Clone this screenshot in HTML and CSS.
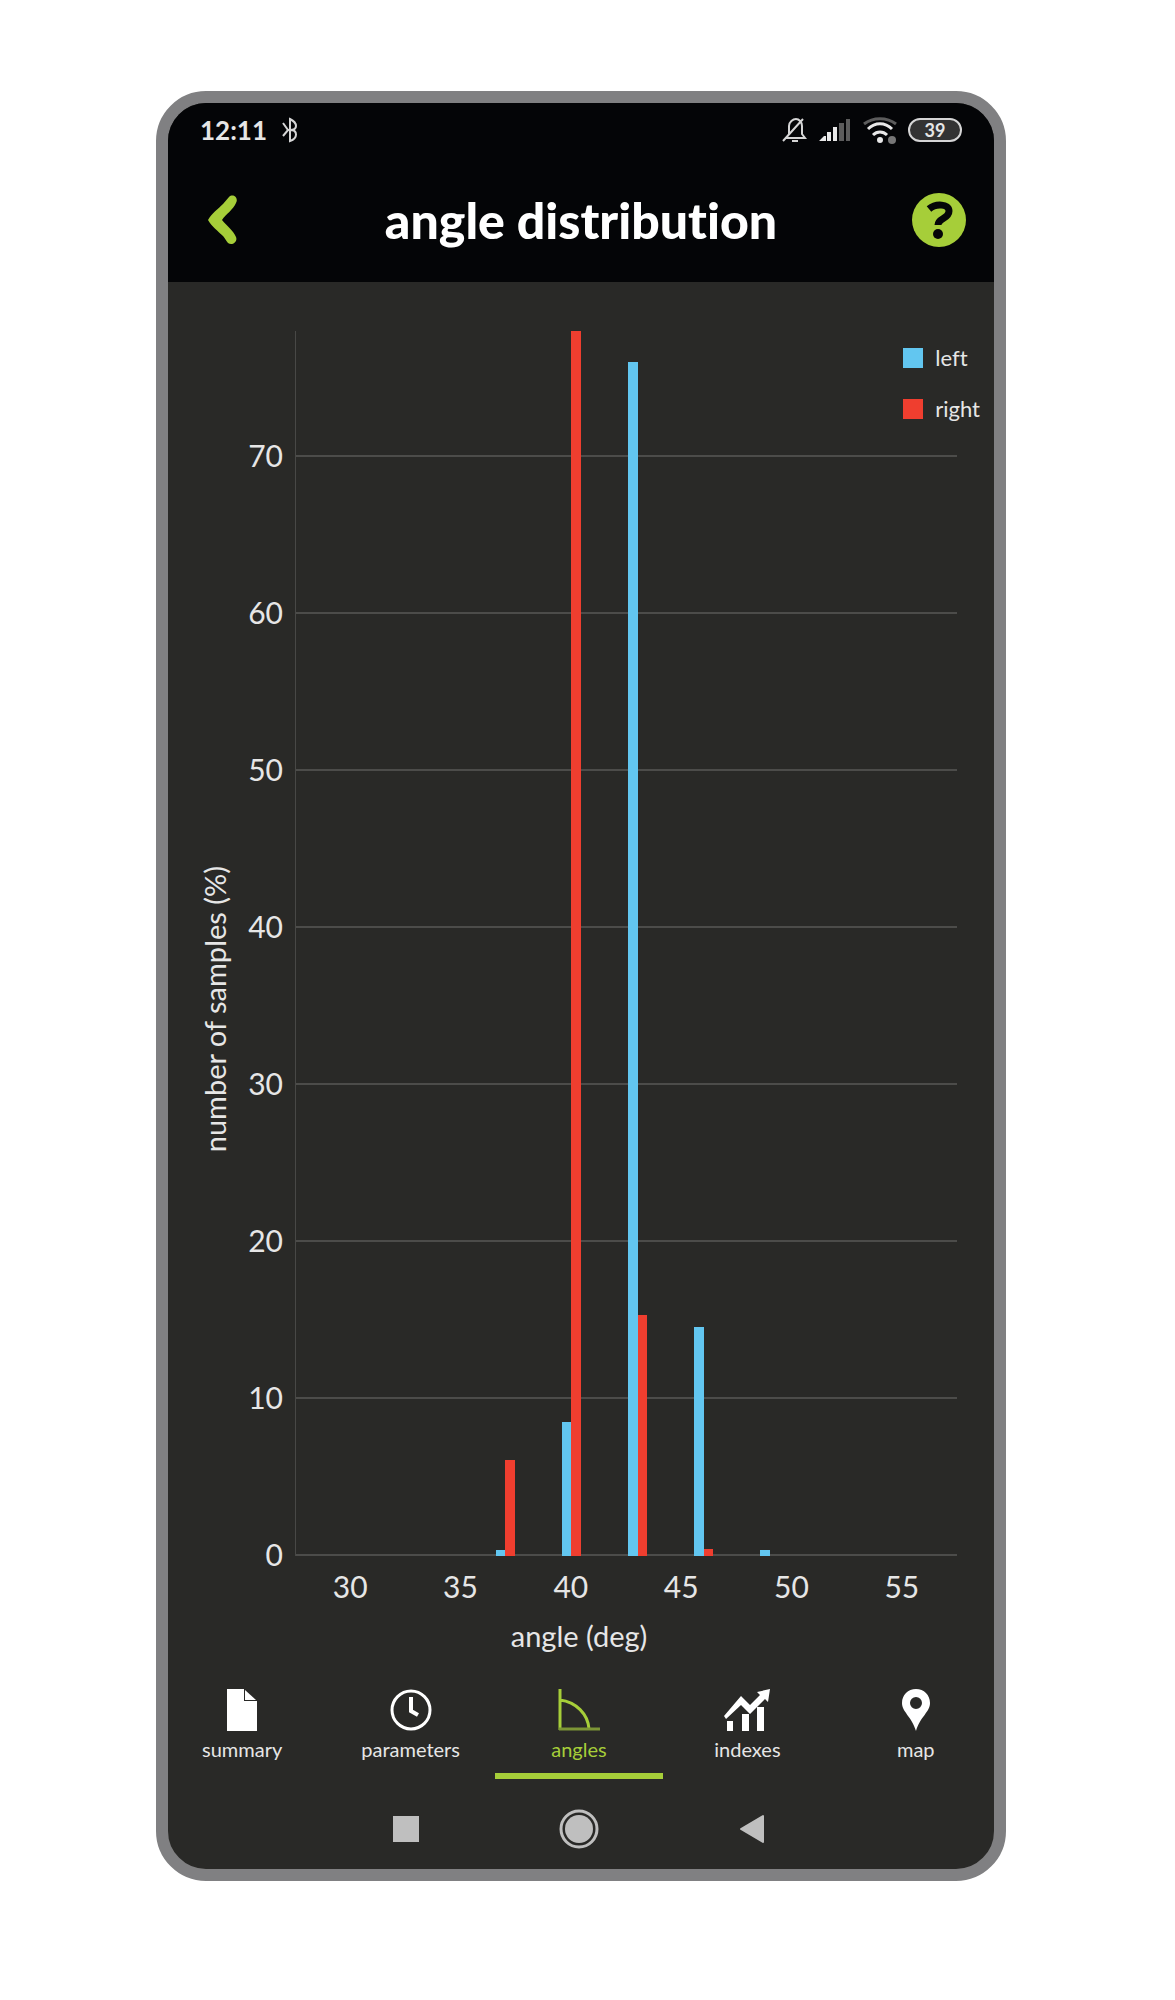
FILE: index.html
```html
<!DOCTYPE html>
<html lang="en">
<head>
<meta charset="UTF-8">
<meta name="viewport" content="width=device-width, initial-scale=1.0">
<title>angle distribution</title>
<link rel="stylesheet" href="styles.css">
</head>
<body>
<div class="phone">
    <header class="top">
        <div class="status">
            <span class="time">12:11</span>
            <svg class="bluetooth" width="18" height="28" viewBox="0 0 18 28"><path d="M2 7l5 7h2c8 0 8-7 0-11v22c8-3 8-11 0-11H7l-5 6"/></svg>
            <div class="status-right">
                <svg width="26" height="28" viewBox="0 0 26 28" fill="none" stroke="#d5d5d5" stroke-width="2"><path d="M5 22h19l-3-4v-8c0-4-3-7-6-7s-7 3-7 7v8l-3 4zM11 25h6M2 25L22 3"/></svg>
                <svg width="34" height="24" viewBox="0 0 34 24"><path fill="#e8e8e8" d="M1 23l5-5h2v5zM9 14h4v9H9zM15 9h4v14h-4z"/><path fill="#5c5c5c" d="M21 5h5v18h-5zM28 1h4v22h-4z"/></svg>
                <svg width="34" height="28" viewBox="0 0 34 28" fill="none" stroke="#e8e8e8" stroke-width="3"><path stroke="#5c5c5c" d="M1 8c9-7 23-7 32 0"/><path d="M5 13c7-7 17-7 24 0M10 19c4-4 10-4 14 0"/><circle cx="17" cy="24" r="2" fill="#e8e8e8" stroke-width="2"/><circle cx="29" cy="24" r="4" fill="#777" stroke="none"/></svg>
                <span class="battery">39</span>
            </div>
        </div>
        <div class="bar">
            <button class="icon-btn" aria-label="back"><svg width="30" height="50" viewBox="0 0 30 50"><path fill="#a6ce39" d="M21 2c4-4 10 1 7 6-3 7-10 11-14 17 5 6 11 10 14 17 2 5-4 9-8 6-2-2-3-5-5-7C10 36 4 32 0 25c4-7 10-11 15-16z"/></svg></button>
            <h1>angle distribution</h1>
            <button class="icon-btn" aria-label="help"><svg width="54" height="54" viewBox="0 0 54 54"><circle cx="27" cy="27" r="27" fill="#a6ce39"/><path d="M17 16c7-6 20-5 20 2 0 8-11 7-11 14" fill="none" stroke="#050608" stroke-width="7"/><circle cx="26" cy="41" r="5" fill="#050608"/></svg></button>
        </div>
    </header>

    <main class="chart">
        <div class="y-title"><span>number of samples (%)</span></div>
        <div class="y-axis">
            <span></span><span>70</span><span>60</span><span>50</span><span>40</span><span>30</span><span>20</span><span>10</span><span>0</span>
        </div>
        <div class="plot">
            <div class="lines"><i></i><i></i><i></i><i></i><i></i><i></i><i></i><i></i></div>
            <div class="bars">
                <div class="group deg37"><div class="left" style="height: 0.5%"></div><div class="right" style="height: 7.8%"></div></div>
                <div class="group deg40"><div class="left" style="height: 10.9%"></div><div class="right" style="height: 100%"></div></div>
                <div class="group deg43"><div class="left" style="height: 97.5%"></div><div class="right" style="height: 19.7%"></div></div>
                <div class="group deg46"><div class="left" style="height: 18.7%"></div><div class="right" style="height: 0.6%"></div></div>
                <div class="group deg49"><div class="left" style="height: 0.5%"></div><div class="right" style="height: 0%"></div></div>
            </div>
        </div>
        <div class="x-axis">
            <span class="deg30">30</span><span class="deg35">35</span><span class="deg40">40</span><span class="deg45">45</span><span class="deg50">50</span><span class="deg55">55</span>
        </div>
        <ul class="legend">
            <li><i class="left"></i>left</li>
            <li><i class="right"></i>right</li>
        </ul>
    </main>
    <div class="x-title">angle (deg)</div>

    <nav class="tabs">
        <a href="#summary"><svg width="30" height="42" viewBox="0 0 30 42"><path fill="#fff" d="M0 0h17v12h13v30H0z"/><path fill="#fff" d="M18 1l11 10H18z"/></svg>summary</a>
        <a href="#parameters"><svg width="42" height="42" viewBox="0 0 42 42" fill="none" stroke="#fff"><circle cx="21" cy="21" r="19" stroke-width="3"/><path stroke-width="4" d="M21 8v14l7 4"/></svg>parameters</a>
        <a href="#angles" class="active"><svg width="42" height="42" viewBox="0 0 42 42" fill="none" stroke="#a6ce39"><path stroke-width="3" d="M2 0v41M2 11c16 2 28 14 29 29"/><path stroke="#7d9636" stroke-width="3" d="M1 40h41"/></svg>angles</a>
        <a href="#indexes"><svg width="46" height="42" viewBox="0 0 46 42"><path fill="#fff" d="M3 32h6v10H3zM18 25h7v17h-7zM33 18h7v24h-7zM0 27L17 7l9 9 10-10-3-3L46 0l-2 13-3-3-15 15-9-9L2 30z"/></svg>indexes</a>
        <a href="#map"><svg width="28" height="42" viewBox="0 0 28 42"><path fill="#fff" fill-rule="evenodd" d="M14 0C6 0 0 6 0 14c0 9 10 14 14 28 4-14 14-19 14-28C28 6 22 0 14 0zm0 8a6 6 0 1 1 0 12 6 6 0 0 1 0-12z"/></svg>map</a>
    </nav>

    <div class="system">
        <button class="icon-btn" aria-label="recent apps"><svg width="40" height="40" viewBox="0 0 40 40"><path fill="#bfbfbf" d="M7 7h26v26H7z"/></svg></button>
        <button class="icon-btn" aria-label="home"><svg width="40" height="40" viewBox="0 0 40 40"><circle cx="20" cy="20" r="18" fill="none" stroke="#bfbfbf" stroke-width="3"/><circle cx="20" cy="20" r="14" fill="#bfbfbf"/></svg></button>
        <button class="icon-btn" aria-label="back"><svg width="40" height="40" viewBox="0 0 40 40"><path fill="#bfbfbf" stroke="#bfbfbf" stroke-width="2" stroke-linejoin="round" d="M31 7v26L9 20z"/></svg></button>
    </div>
</div>
</body>
</html>
```
FILE: styles.css
```css
* {
    box-sizing: border-box;
}
body {
    font-family: Lato, "Open Sans", sans-serif;
    font-variant-ligatures: none;
    margin: 0;
    padding: 91px 169px 119px 156px;
    background-color: #fff;
    color: #e6e6e6;
}
svg {
    display: block;
}
.phone {
    border: 12px solid #808082;
    border-radius: 50px;
    background-color: #292927;
    overflow: hidden;
}
.top {
    background-color: #040507;
    padding: 0 28px;
}
.status {
    display: flex;
    align-items: center;
    height: 54px;
    padding: 0 4px;
}
.time {
    font-size: 26px;
    font-weight: bold;
}
.bluetooth {
    margin-left: 14px;
    fill: none;
    stroke: #d5d5d5;
    stroke-width: 2;
}
.status-right {
    display: flex;
    align-items: center;
    gap: 11px;
    margin-left: auto;
}
.battery {
    width: 54px;
    height: 24px;
    border: 2px solid #d5d5d5;
    border-radius: 12px;
    background-color: #333;
    font-size: 18px;
    font-weight: bold;
    line-height: 20px;
    text-align: center;
}
.bar {
    display: grid;
    grid-template-columns: 54px 1fr 54px;
    align-items: center;
    height: 125px;
}
.icon-btn {
    display: flex;
    justify-content: center;
    padding: 0;
    border: none;
    background: none;
    cursor: pointer;
}
h1 {
    margin: 0;
    font-size: 50px;
    font-weight: 900;
    text-align: center;
    color: #fff;
}

/* chart */
.chart {
    position: relative;
    display: grid;
    grid-template-columns: 34px 40px 1fr;
    grid-template-rows: 1225px 60px;
    column-gap: 12px;
    padding: 49px 37px 0 29px;
    font-size: 30px;
}
.y-title {
    display: flex;
    align-items: center;
    justify-content: center;
    padding-top: 132px;
    font-size: 29px;
}
.y-title span {
    writing-mode: vertical-rl;
    transform: rotate(180deg);
    white-space: nowrap;
}
.y-axis, .lines {
    display: grid;
    grid-template-rows: 8fr repeat(7, 10fr);
}
.y-axis {
    grid-template-rows: 0 8fr repeat(7, 10fr);
    text-align: right;
    line-height: 32px;
}
.y-axis span {
    align-self: end;
    transform: translateY(45%);
}
.plot {
    display: grid;
    border-left: 1px solid #484846;
}
.lines, .bars {
    grid-area: 1 / 1;
}
.lines i {
    border-bottom: 2px solid #4c4c4a;
}
/* one column per degree, from 27.5 to 57.5 */
.bars, .x-axis {
    display: grid;
    grid-template-columns: repeat(30, minmax(0, 1fr));
}
.group {
    display: flex;
    align-items: flex-end;
    justify-content: center;
}
.group div {
    width: 44%;
}
.left {
    background-color: #62c6f0;
}
.right {
    background-color: #ef3e2f;
}
.x-axis {
    grid-column: 3;
    padding-top: 12px;
    line-height: 36px;
}
.x-axis span {
    display: flex;
    justify-content: center;
}
.deg30 { grid-column: 3; }
.deg35 { grid-column: 8; }
.deg37 { grid-column: 10; }
.deg40 { grid-column: 13; }
.deg43 { grid-column: 16; }
.deg45 { grid-column: 18; }
.deg46 { grid-column: 19; }
.deg49 { grid-column: 22; }
.deg50 { grid-column: 23; }
.deg55 { grid-column: 28; }
.legend {
    position: absolute;
    top: 64px;
    right: 14px;
    display: grid;
    gap: 27px;
    margin: 0;
    padding: 0;
    list-style: none;
    font-size: 22px;
    line-height: 24px;
}
.legend li {
    display: flex;
    align-items: center;
    gap: 12px;
}
.legend i {
    width: 20px;
    height: 20px;
}
.x-title {
    padding-right: 4px;
    font-size: 29px;
    line-height: 40px;
    text-align: center;
}

/* bottom */
.tabs {
    display: grid;
    grid-template-columns: repeat(5, 1fr);
    margin: 33px -6px 0 -10px;
}
.tabs a {
    display: flex;
    flex-direction: column;
    align-items: center;
    gap: 6px;
    height: 90px;
    border-bottom: 6px solid transparent;
    color: #e6e6e6;
    font-size: 20px;
    line-height: 24px;
    text-decoration: none;
}
.tabs .active {
    border-color: #a6ce39;
    color: #a6ce39;
}
.system {
    display: flex;
    justify-content: center;
    gap: 133px;
    padding: 30px 4px 20px 0;
}
```
